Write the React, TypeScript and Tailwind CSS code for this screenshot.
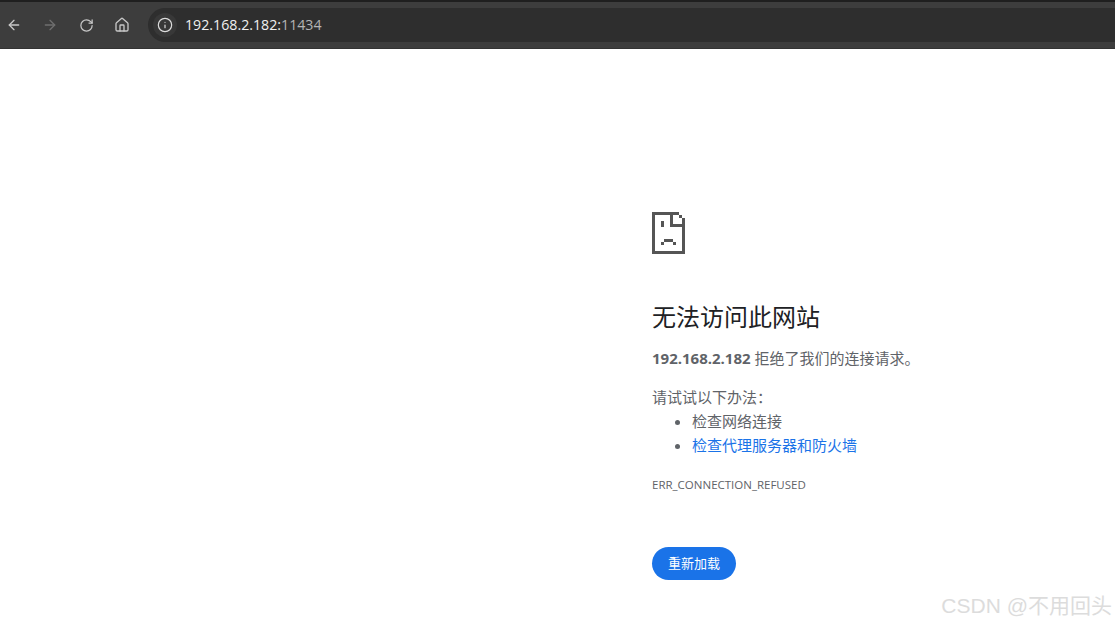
import React from "react";
import { ArrowLeft, ArrowRight, RotateCw, Home, Info } from "lucide-react";

const cjk = '"Open Sans","Noto Sans CJK SC",sans-serif';

function SadPage() {
  const px: [number, number, number, number][] = [
    [0, 0, 9, 1], [0, 0, 1, 14], [0, 13, 11, 1], [10, 2, 1, 12],
    [9, 1, 1, 1], [6, 0, 1, 5], [6, 4, 5, 1],
    [3, 3, 1, 2], [4, 9, 3, 1], [3, 10, 1, 1], [7, 10, 1, 1],
  ];
  return (
    <svg width="33" height="42" viewBox="0 0 33 42" className="block" shapeRendering="crispEdges">
      {px.map(([x, y, w, h], i) => (
        <rect key={i} x={x * 3} y={y * 3} width={w * 3} height={h * 3} fill="#555555" />
      ))}
    </svg>
  );
}

export default function App() {
  return (
    <div className="relative h-[625px] w-[1115px] overflow-hidden bg-white" style={{ fontFamily: cjk }}>
      <header className="h-[49px] border-t-2 border-b border-t-[#1f1f1f] border-b-[#333333] bg-[#3d3d3d] flex items-center">
        <div className="flex items-center w-[148px] shrink-0 pl-[5px] text-[#c7c7c7]">
          <button className="w-[18px] flex justify-center"><ArrowLeft size={16} strokeWidth={2} /></button>
          <button className="w-[18px] ml-[18px] flex justify-center text-[#6f6f6f]"><ArrowRight size={16} strokeWidth={2} /></button>
          <button className="w-[18px] ml-[18px] flex justify-center"><RotateCw size={15} strokeWidth={2} /></button>
          <button className="w-[18px] ml-[18px] flex justify-center"><Home size={16} strokeWidth={2} /></button>
        </div>
        <div className="flex-1 h-[34px] mt-[-1px] rounded-l-full bg-[#2e2e2e] flex items-center pl-[5px]">
          <div className="w-[24px] h-[24px] rounded-full bg-[#383838] flex items-center justify-center text-[#dcdcdc]">
            <Info size={16} strokeWidth={1.8} />
          </div>
          <div className="ml-[8px] text-[14.2px] text-[#f0f0f0]">
            192.168.2.182:<span className="text-[#b4b4b4]">11434</span>
          </div>
        </div>
      </header>

      <main className="pl-[652px] pt-[163px] text-[#5f6368]">
        <SadPage />
        <h1 className="mt-[47px] text-[24px] leading-[32px] font-normal text-[#202124]">无法访问此网站</h1>
        <p className="mt-[15px] text-[15px] leading-[20px]">
          <b className="font-bold">192.168.2.182</b> 拒绝了我们的连接请求。
        </p>
        <p className="mt-[19px] text-[15px] leading-[20px]">请试试以下办法：</p>
        <ul className="mt-[2px] pl-[40px] list-disc text-[15px] leading-[24px]">
          <li>检查网络连接</li>
          <li className="text-[#5f6368]"><a className="text-[#1a73e8]">检查代理服务器和防火墙</a></li>
        </ul>
        <div className="mt-[20px] text-[11.5px] leading-[16px]">ERR_CONNECTION_REFUSED</div>
        <button className="mt-[54px] h-[33px] w-[84px] rounded-full bg-[#1a73e8] text-white text-[13px] flex items-center justify-center">
          重新加载
        </button>
      </main>

      <div className="absolute right-[3px] top-[592px] text-[21px] leading-[28px] text-[#dcdcdc] whitespace-nowrap" style={{ fontFamily: '"Liberation Sans","Noto Sans CJK SC",sans-serif' }}>
        CSDN @不用回头
      </div>
    </div>
  );
}
